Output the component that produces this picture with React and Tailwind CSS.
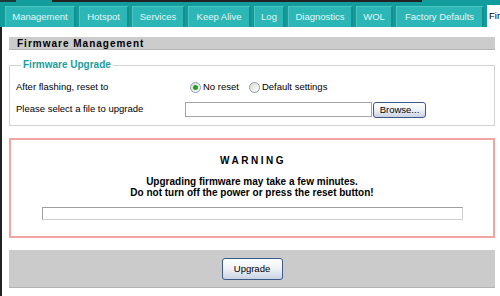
const tabs = [
  { label: 'Management', w: 'w-[71px]' },
  { label: 'Hotspot', w: 'w-[50px]' },
  { label: 'Services', w: 'w-[53px]' },
  { label: 'Keep Alive', w: 'w-[63px]' },
  { label: 'Log', w: 'w-[31px]' },
  { label: 'Diagnostics', w: 'w-[65px]' },
  { label: 'WOL', w: 'w-[37px]' },
  { label: 'Factory Defaults', w: 'w-[88px]' },
];

function Radio({ checked, label }) {
  return (
    <label className="flex items-center gap-[2px]">
      <span className="w-[11px] h-[11px] rounded-full border border-[#8aa0b8] bg-gradient-to-br from-[#dcdcd6] to-white flex items-center justify-center">
        {checked && <span className="w-[5px] h-[5px] rounded-full bg-[#21a121]" />}
      </span>
      <span>{label}</span>
    </label>
  );
}

function XpButton({ children, className = '' }) {
  return (
    <button className={`rounded-[3px] border border-[#3d5a87] bg-gradient-to-b from-white via-[#eef1f6] to-[#c9d3e3] text-black leading-none ${className}`}>
      {children}
    </button>
  );
}

export default function App() {
  return (
    <div className="w-[500px] h-[296px] overflow-hidden bg-white flex flex-col font-['Liberation_Sans',Arial,sans-serif] text-[9.5px] text-black">
      <div className="h-[27px] bg-[#129c9c] flex flex-col">
        <div className="h-[2px] flex">
          <div className="w-[16px] bg-[#1b3b3b]" />
          <div className="w-[36px]" />
          <div className="w-[370px] bg-[#222]" />
        </div>
        <div className="flex-1 flex items-end gap-[3px] pl-[5px]">
          {tabs.map((t) => (
            <div
              key={t.label}
              className={`${t.w} h-[21px] bg-[#2cb6b6] border-t border-l border-[#4cc4c4] border-r-2 border-r-[#14908f] flex items-center justify-center text-[#e3f7f7] whitespace-nowrap`}
            >
              {t.label}
            </div>
          ))}
          <div className="flex-1 h-[22px] bg-white flex items-center pl-[2px] text-black whitespace-nowrap overflow-hidden">
            Firmware Upgrade
          </div>
        </div>
      </div>

      <div className="flex-1 border-l-2 border-[#222] pl-[7px] pr-[5px] flex flex-col">
        <div className="mt-[10px] h-[13px] bg-[#cccccc] border-b border-[#b5b5b5] flex items-center pl-[8px] font-bold text-[10px] tracking-[1px]">
          Firmware Management
        </div>

        <fieldset className="mt-[9px] border border-[#d3d3d3] px-[6px] pb-[8px]">
          <legend className="ml-[5px] px-[2px] text-[10px] leading-[12px] font-bold text-[#1b9c9c]">
            Firmware Upgrade
          </legend>
          <div className="mt-[9px] h-[14px] flex items-center">
            <div className="w-[169px]">After flashing, reset to</div>
            <div className="ml-[5px] flex items-center gap-[10px]">
              <Radio checked label="No reset" />
              <Radio label="Default settings" />
            </div>
          </div>
          <div className="mt-[8px] h-[15px] flex items-center">
            <div className="w-[169px]">Please select a file to upgrade</div>
            <div className="w-[187px] h-[15px] border border-[#a5a5a5] bg-white" />
            <XpButton className="ml-[1px] w-[53px] h-[16px] text-[9.5px]">Browse...</XpButton>
          </div>
        </fieldset>

        <div className="mt-[12px] h-[100px] border-2 border-[#f2a5a5] flex flex-col items-center">
          <div className="mt-[15px] leading-[12px] font-bold text-[10px] tracking-[2.5px] pl-[2px]">WARNING</div>
          <div className="mt-[9px] font-bold text-[10px] leading-[11px] text-center">
            <div>Upgrading firmware may take a few minutes.</div>
            <div>Do not turn off the power or press the reset button!</div>
          </div>
          <div className="mt-[9px] w-[421px] h-[13px] border border-[#a0a0a0] border-b-[#cfcfcf] border-r-[#cfcfcf] bg-white" />
        </div>

        <div className="mt-[12px] h-[38px] bg-[#cbcbcb] border-b border-[#b0b0b0] flex items-center justify-center">
          <XpButton className="w-[61px] h-[22px] text-[9.5px]">Upgrade</XpButton>
        </div>
      </div>
    </div>
  );
}
